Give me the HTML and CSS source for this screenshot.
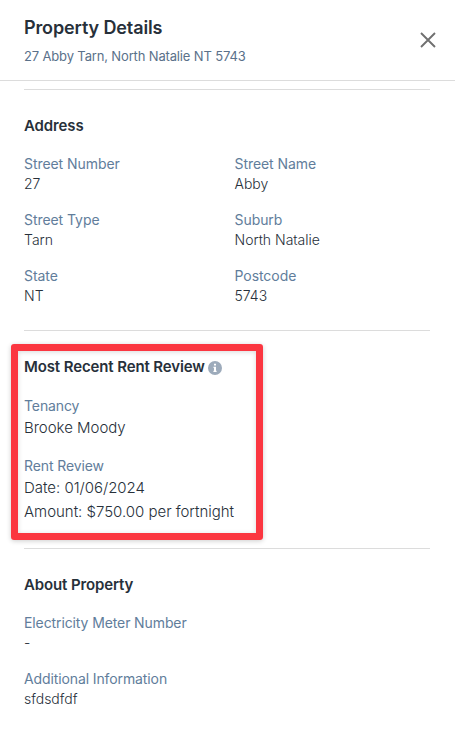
FILE: index.html
```html
<!DOCTYPE html>
<html>
    <head>
        <title>Property Details</title>
        <meta charset="UTF-8">
        <meta name="viewport" content="width=device-width, initial-scale=1.0">
        <link rel="stylesheet" href="styles.css">
    </head>
    <body>
        <header class="header">
            <div>
                <h1>Property Details</h1>
                <p class="subtitle">27 Abby Tarn, North Natalie NT 5743</p>
            </div>
            <button class="close" aria-label="Close">
                <svg width="16" height="16" viewBox="0 0 16 16"><path d="M1 1l14 14M15 1L1 15" stroke="#707070" stroke-width="1.9" fill="none"/></svg>
            </button>
        </header>
        <main class="content">
            <section class="section address">
                <h2>Address</h2>
                <dl class="grid">
                    <div><dt>Street Number</dt><dd>27</dd></div>
                    <div><dt>Street Name</dt><dd>Abby</dd></div>
                    <div><dt>Street Type</dt><dd>Tarn</dd></div>
                    <div><dt>Suburb</dt><dd>North Natalie</dd></div>
                    <div><dt>State</dt><dd>NT</dd></div>
                    <div><dt>Postcode</dt><dd>5743</dd></div>
                </dl>
            </section>
            <section class="section review">
                <div class="highlight">
                    <h2>Most Recent Rent Review
                        <svg class="info" width="14" height="14" viewBox="0 0 14 14"><circle cx="7" cy="7" r="7" fill="#9dabbb"/><path d="M6 2.8h2v1.8H6zM5.5 5.8H8v4h.6v1.3H5.4V9.8H6V7.1h-.5z" fill="#fff"/></svg>
                    </h2>
                    <dl>
                        <dt>Tenancy</dt>
                        <dd>Brooke Moody</dd>
                        <dt>Rent Review</dt>
                        <dd>Date: 01/06/2024</dd>
                        <dd>Amount: $750.00 per fortnight</dd>
                    </dl>
                </div>
            </section>
            <section class="section about">
                <h2>About Property</h2>
                <dl class="list">
                    <div><dt>Electricity Meter Number</dt><dd>-</dd></div>
                    <div><dt>Additional Information</dt><dd>sfdsdfdf</dd></div>
                </dl>
            </section>
        </main>
    </body>
</html>
```

FILE: styles.css
```css
*{
    box-sizing: border-box;
    margin: 0;
    padding: 0;
}
body{
    background: #fff;
    color: #27303a;
    font-family: Inter, sans-serif;
    font-size: 14px;
    font-weight: 360;
    line-height: 20px;
}
.header{
    display: flex;
    justify-content: space-between;
    align-items: center;
    height: 81px;
    padding: 0 19px 0 24px;
    border-bottom: 1px solid #dcdcdc;
}
h1{
    font-size: 18px;
    font-weight: 580;
    line-height: 28px;
    letter-spacing: -0.12px;
}
.subtitle{
    margin-top: 4px;
    color: #5a718a;
    font-size: 13px;
    font-weight: 380;
    letter-spacing: -0.15px;
}
.close{
    display: flex;
    border: 0;
    background: none;
}
.content{
    padding: 8px 25px 0 24px;
}
.section{
    border-top: 1px solid #dcdcdc;
}
h2{
    font-size: 15px;
    font-weight: 590;
    line-height: 20px;
    letter-spacing: -0.12px;
}
dt{
    color: #617d9b;
    font-weight: 370;
    letter-spacing: -0.11px;
}
.address{
    height: 241px;
    padding-top: 26px;
}
.grid{
    display: grid;
    grid-template-columns: 210.5px 1fr;
    row-gap: 16px;
    margin-top: 18px;
}
.grid dt{
    letter-spacing: -0.06px;
}
.review{
    height: 218px;
    padding-top: 13px;
}
.highlight{
    width: 251.5px;
    height: 196px;
    margin-left: -13px;
    padding: 6px 0 0 6px;
    border: 7px solid #fb3640;
    border-radius: 3px;
    box-shadow: 0 1px 5px rgba(0, 0, 0, .2), inset 0 1px 5px rgba(0, 0, 0, .15);
}
.info{
    margin-left: -0.5px;
    vertical-align: -3px;
}
.highlight dl{
    margin-top: 19px;
}
.highlight dd{
    font-size: 15px;
    line-height: 24px;
    letter-spacing: -0.02px;
}
.highlight dd + dt{
    margin-top: 16px;
}
.about{
    padding-top: 26px;
}
.list{
    display: grid;
    row-gap: 16px;
    margin-top: 18px;
}
```
